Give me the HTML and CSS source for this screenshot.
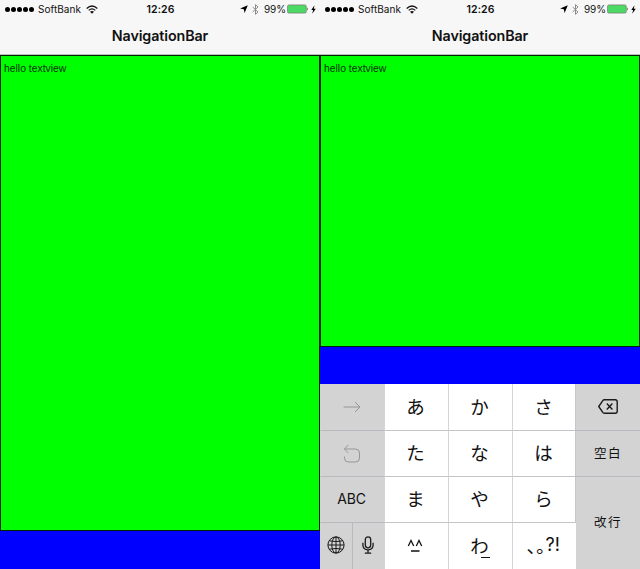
FILE: index.html
```
<!DOCTYPE html>
<html lang="ja">
<head>
<meta charset="utf-8">
<title>NavigationBar</title>
<link rel="stylesheet" href="styles.css">
</head>
<body>
<svg class="defs" width="0" height="0">
  <symbol id="wifi" viewBox="0 0 12 9"><g fill="none" stroke="#111"><path d="M.7 3.5Q6-1.5 11.3 3.5" stroke-width="1.3"/><path d="M2.7 5.4Q6 2.4 9.3 5.4" stroke-width="1.2"/></g><path d="M4 6.8Q6 5.2 8 6.8L6 8.8Z" fill="#111"/></symbol>
  <symbol id="loc" viewBox="0 0 8 8"><path d="M7.8.2L4.6 7.9L3.8 4.2L.1 3.4Z" fill="#000"/></symbol>
  <symbol id="bt" viewBox="0 0 7 11"><path d="M.7 3L6 8L3.5 10.4V.6L6 3L.7 8" fill="none" stroke="#8c8c8c" stroke-width="1"/></symbol>
  <symbol id="battery" viewBox="0 0 22 10"><rect x=".5" y=".9" width="18.8" height="8.2" rx="1.5" fill="#4cd964" stroke="#777" stroke-width=".7"/><path d="M20.2 3.4Q21.7 5 20.2 6.6Z" fill="#222"/></symbol>
  <symbol id="bolt" viewBox="0 0 5 9"><path d="M3.5.3L.3 5H2.1L1.2 8.7L4.8 3.8H2.8Z" fill="#000"/></symbol>
</svg>
<main class="screens">
  <section class="phone">
    <header class="top">
      <div class="status">
        <div class="left"><span class="dots"><i></i><i></i><i></i><i></i><i></i></span><span class="carrier">SoftBank</span><svg class="wifi"><use href="#wifi"/></svg></div>
        <div class="time">12:26</div>
        <div class="right"><svg class="loc"><use href="#loc"/></svg><svg class="bt"><use href="#bt"/></svg><span class="pct">99%</span><svg class="battery"><use href="#battery"/></svg><svg class="bolt"><use href="#bolt"/></svg></div>
      </div>
      <h1>NavigationBar</h1>
    </header>
    <div class="textview tall">hello textview</div>
  </section>
  <section class="phone">
    <header class="top">
      <div class="status">
        <div class="left"><span class="dots"><i></i><i></i><i></i><i></i><i></i></span><span class="carrier">SoftBank</span><svg class="wifi"><use href="#wifi"/></svg></div>
        <div class="time">12:26</div>
        <div class="right"><svg class="loc"><use href="#loc"/></svg><svg class="bt"><use href="#bt"/></svg><span class="pct">99%</span><svg class="battery"><use href="#battery"/></svg><svg class="bolt"><use href="#bolt"/></svg></div>
      </div>
      <h1>NavigationBar</h1>
    </header>
    <div class="textview short">hello textview</div>
    <div class="keyboard">
      <div class="key side"><svg width="18" height="12" viewBox="0 0 18 12" fill="none" stroke="#969696"><path d="M.5 6H16.8M12 1L17 6L12 11"/></svg></div>
      <div class="key">あ</div><div class="key">か</div><div class="key">さ</div>
      <div class="key side last"><svg width="20" height="15" viewBox="0 0 20 15" fill="none" stroke="#1a1a1a" stroke-width="1.4"><path d="M6.2 .8H17.2Q19.2 .8 19.2 2.8V12.2Q19.2 14.2 17.2 14.2H6.2Q5.4 14.2 4.8 13.4L.7 7.5L4.8 1.6Q5.4 .8 6.2 .8Z"/><path d="M8.8 4.6L14.4 10.4M14.4 4.6L8.8 10.4"/></svg></div>
      <div class="key side"><svg width="18" height="19" viewBox="0 0 18 19" fill="none" stroke="#969696"><path d="M5.4 1L1.3 5L5.4 9M1.3 5H12.5Q16.5 5 16.5 9V14Q16.5 18 12.5 18H5.5Q1.5 18 1.5 14V12.5"/></svg></div>
      <div class="key">た</div><div class="key">な</div><div class="key">は</div>
      <div class="key side last word">空白</div>
      <div class="key side abc">ABC</div>
      <div class="key">ま</div><div class="key">や</div><div class="key">ら</div>
      <div class="key side last word enter">改行</div>
      <div class="pair">
        <div class="key side"><svg width="18" height="18" viewBox="0 0 18 18" fill="none" stroke="#1a1a1a" stroke-width="1"><circle cx="9" cy="9" r="8.1"/><ellipse cx="9" cy="9" rx="4.2" ry="8.1"/><path d="M9 1V17M1 9H17M2.4 4.8Q9 6.4 15.6 4.8M2.4 13.2Q9 11.6 15.6 13.2"/></svg></div>
        <div class="key side mic"><svg width="12" height="18" viewBox="0 0 12 18" fill="none" stroke="#1a1a1a" stroke-width="1.3"><rect x="3.3" y=".8" width="5.4" height="11" rx="2.7"/><path d="M.9 6.8V9Q.9 13.8 6 13.8Q11.1 13.8 11.1 9V6.8M6 13.8V17M2.8 17.2H9.2"/></svg></div>
      </div>
      <div class="key face"><svg width="16" height="14" viewBox="0 0 16 14" fill="none" stroke="#111" stroke-width="1.3"><path d="M1.3 7L4 1.5L6.7 7M9.3 7L12 1.5L14.7 7M4 12H12.5"/></svg></div>
      <div class="key wa">わ<i></i></div>
      <div class="key punct"><span class="cjk">､｡</span><span class="latin">?!</span></div>
    </div>
  </section>
</main>
</body>
</html>
```

FILE: styles.css
```
* { box-sizing: border-box; }
body { margin: 0; overflow: hidden; background: #00f; color: #111; font-family: Inter, "Noto Sans CJK JP", sans-serif; }
.defs { display: block; }
svg { display: block; flex: none; }
.screens { display: grid; grid-template-columns: 320px 320px; height: 569px; }
.phone { display: flex; flex-direction: column; height: 569px; background: #00f; }
.top { height: 55px; background: #f7f7f7; border-bottom: 1px solid #b5c2b5; flex: none; }
.status { display: grid; grid-template-columns: 1fr 28px 1fr; grid-template-rows: 18px; height: 18px; padding: 0 4px 0 5px; font-size: 10px; line-height: 18px; }
.left, .right { display: flex; align-items: center; }
.right { justify-content: flex-end; }
.dots { display: flex; gap: 1px; margin-right: 4px; }
.dots i { width: 5px; height: 5px; border-radius: 50%; background: #000; }
.carrier { width: 44px; margin-right: 4px; white-space: nowrap; letter-spacing: .05px; }
.wifi { width: 12px; height: 9px; }
.time { line-height: 20px; font-size: 10.5px; font-weight: 600; text-align: center; white-space: nowrap; letter-spacing: .05px; }
.loc { width: 8px; height: 8px; margin-right: 4px; }
.bt { width: 7px; height: 11px; margin-right: 5px; }
.pct { width: 22px; margin-right: 1px; white-space: nowrap; letter-spacing: -.1px; }
.battery { width: 22px; height: 10px; margin-right: 2px; }
.bolt { width: 5px; height: 9px; }
h1 { margin: 0; height: 36px; font-size: 14.3px; line-height: 36px; font-weight: 600; text-align: center; letter-spacing: -.1px; }
.textview { flex: none; border: 1px solid #062006; background: #0f0; padding: 6px 3px; font: 10.4px/13px "Liberation Sans", sans-serif; color: #063006; }
.tall { height: 476px; }
.short { height: 292px; }
.keyboard { display: grid; grid-template-columns: repeat(5, 64px); grid-template-rows: 47px 46px 46px 46px; height: 185px; margin-top: auto; background: #fff; }
.key { display: flex; align-items: center; justify-content: center; padding: 0 2px 3px 0; border-left: 1px solid #d4d4da; border-bottom: 1px solid #c3c3c8; font: 18.5px/24px "Noto Sans CJK JP", sans-serif; background: #fff; }
.key.side { padding: 0 2px 1px 0; background: #d3d3d3; border-left-color: #d3d3d3; border-bottom-color: #b9b9c0; }
.key.last { margin-left: -1px; padding-right: 0; border-left-color: #c6c6cb; }
.key.word { font-size: 12.5px; letter-spacing: 1.5px; padding: 0 0 2px; }
.key.abc { font: 14px/20px Inter, sans-serif; letter-spacing: -.2px; }
.key.enter { grid-column: 5; grid-row: 3 / 5; border-bottom: 0; }
.pair { display: grid; grid-template-columns: 32px 32px; }
.pair .key { border-bottom: 0; padding-bottom: 2px; }
.pair .mic { border-left-color: #b9b9c0; }
.key.face, .key.wa, .key.punct { border-bottom: 0; }
.key.face { padding: 0 3px 1px 0; }
.wa { position: relative; }
.wa i { position: absolute; left: 32px; top: 34px; width: 9px; height: 1px; background: #111; }
.latin { font: 18px/24px Inter, sans-serif; }
```
